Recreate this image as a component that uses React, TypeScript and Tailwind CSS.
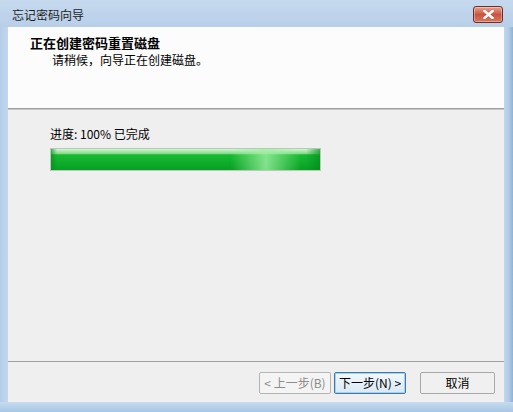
import React from "react";

const font = { fontFamily: '"Noto Sans CJK SC", "Liberation Sans", sans-serif' };

function CloseButton() {
  return (
    <div className="w-[30px] h-[17px] rounded-[3px] border border-[#6b2f27] bg-gradient-to-b from-[#e8a493] via-[#c9533f] to-[#d7785f] flex items-center justify-center shadow-[inset_0_0_0_1px_rgba(255,255,255,0.35)]">
      <svg width="11" height="9" viewBox="0 0 11 9">
        <path d="M1.5 1 L9.5 8 M9.5 1 L1.5 8" stroke="#ffffff" strokeWidth="2.4" strokeLinecap="square" />
      </svg>
    </div>
  );
}

function ProgressBar() {
  return (
    <div className="relative w-[271px] h-[23px] border border-[#b9c9b9] bg-[#0ca52a] overflow-hidden">
      <div className="absolute inset-0 bg-gradient-to-b from-[#9fe6a4] via-[#17b932] via-30% to-[#06a024]" />
      <div className="absolute left-0 right-0 top-0 h-[5px] bg-gradient-to-b from-[#d8f5d9] to-[#7fdc88] opacity-90" />
      <div className="absolute top-0 bottom-0 left-[180px] w-[70px] bg-gradient-to-r from-transparent via-[#9ff0a2] to-transparent opacity-80" />
      <div className="absolute top-0 bottom-0 right-0 w-[14px] bg-gradient-to-r from-transparent to-[#038a1c] opacity-70" />
      <div className="absolute top-0 bottom-0 left-0 w-[6px] bg-gradient-to-r from-[#058f1f] to-transparent opacity-70" />
    </div>
  );
}

export default function App() {
  return (
    <div className="w-[513px] h-[412px] flex flex-col bg-[#b4cde8] overflow-hidden" style={font}>
      {/* title bar */}
      <div className="h-[27px] flex items-center justify-between pl-[12px] pr-[10px] bg-gradient-to-b from-[#c6d9ee] to-[#b8cfe9]">
        <span className="text-[12px] leading-[14px] text-[#1e1e1e] mt-[2px]">忘记密码向导</span>
        <div className="mt-[2px]">
          <CloseButton />
        </div>
      </div>
      {/* middle */}
      <div className="flex-1 flex">
        <div className="w-[8px] bg-gradient-to-r from-[#b6cde8] to-[#c3d6ee]" />
        <div className="flex-1 flex flex-col bg-[#efefef]">
          <div className="h-[81px] bg-[#fcfcfc] pl-[22px] pt-[8px]">
            <div className="text-[13px] leading-[16px] font-bold text-black">正在创建密码重置磁盘</div>
            <div className="text-[12px] leading-[15px] text-black pl-[22px] mt-[1px]">请稍候，向导正在创建磁盘。</div>
          </div>
          <div className="h-[2px] bg-[#9e9e9e] border-b border-[#c8c8c8]" />
          <div className="flex-1 pl-[42px] pt-[16px]">
            <div className="text-[12px] leading-[16px] text-black">进度: 100% 已完成</div>
            <div className="mt-[6px]">
              <ProgressBar />
            </div>
          </div>
          <div className="h-[1px] bg-[#a0a0a0]" />
          <div className="h-[40px] flex items-start justify-end pr-[9px] pt-[10px] gap-[3px] bg-[#efefef]">
            <div className="w-[72px] h-[22px] border border-[#b5b5b5] bg-[#f4f4f4] rounded-[2px] flex items-center justify-center text-[12px] text-[#8c8c8c]">
              &lt; 上一步(B)
            </div>
            <div className="w-[72px] h-[22px] border border-[#3d7bad] bg-gradient-to-b from-[#f2f8fd] to-[#d9e9f6] rounded-[2px] flex items-center justify-center text-[12px] text-black shadow-[inset_0_0_0_1px_#a8d0ee]">
              下一步(N) &gt;
            </div>
            <div className="ml-[11px] w-[75px] h-[22px] border border-[#a8a8a8] bg-[#f0f0f0] rounded-[2px] flex items-center justify-center text-[12px] text-black">
              取消
            </div>
          </div>
        </div>
        <div className="w-[9px] bg-gradient-to-r from-[#c2d6ec] via-[#b2cce7] to-[#8fb2d6]" />
      </div>
      <div className="h-[10px] bg-gradient-to-b from-[#c7dbef] to-[#a6c7e4]" />
    </div>
  );
}
